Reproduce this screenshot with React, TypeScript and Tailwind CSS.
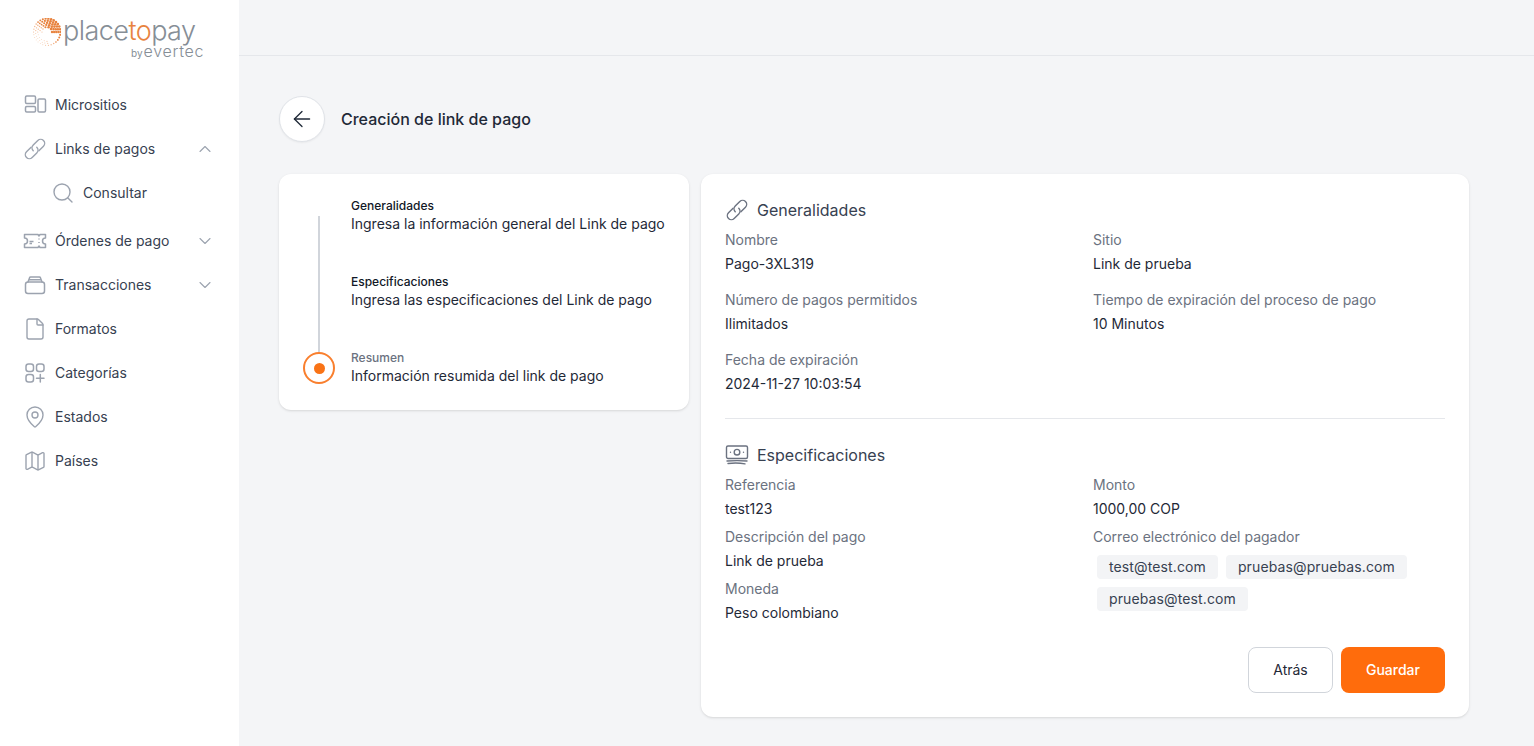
import type { ReactNode } from 'react';
import { ArrowLeft, ChevronDown, ChevronUp, File, Map as MapIcon, MapPin, Search } from 'lucide-react';

const iconCls = 'w-[24px] h-[24px] shrink-0 text-[#9ca3af]';

function SitesIcon() {
  return (
    <svg viewBox="0 0 24 24" className={iconCls} fill="none" stroke="currentColor" strokeWidth="1.5">
      <rect x="2.5" y="3" width="10" height="7.5" rx="1.2" />
      <rect x="2.5" y="13.5" width="10" height="5.5" rx="1.2" />
      <rect x="15" y="6" width="7.5" height="13" rx="1.2" />
    </svg>
  );
}

function ChainIcon({ className }: { className: string }) {
  return (
    <svg viewBox="0 0 24 24" className={className} fill="none" stroke="currentColor" strokeWidth="1.4" strokeLinecap="round">
      <g transform="rotate(-45 12 12)">
        <path d="M10.5 8H4a4 4 0 0 0 0 8h6.5a4 4 0 0 0 4-4" />
        <path d="M13.5 16H20a4 4 0 0 0 0-8h-6.5a4 4 0 0 0-4 4" />
      </g>
    </svg>
  );
}

function TicketIcon() {
  return (
    <svg viewBox="0 0 24 24" className={iconCls} fill="none" stroke="currentColor" strokeWidth="1.5" strokeLinejoin="round">
      <path d="M1.5 5.5h13.5l1 1.5 1-1.5h5.5v3.5a3 3 0 0 0 0 6v3.5H17l-1-1.5-1 1.5H1.5V15a3 3 0 0 0 0-6z" />
      <path d="M6.5 12.5h4M6.5 14.5h2.5M16 9.5v1M16 13v1" />
    </svg>
  );
}

function WalletIcon() {
  return (
    <svg viewBox="0 0 24 24" className={iconCls} fill="none" stroke="currentColor" strokeWidth="1.5" strokeLinejoin="round" strokeLinecap="round">
      <rect x="2.5" y="9" width="19" height="11.5" rx="2.5" />
      <path d="M5 9l1.6-4.2a1 1 0 0 1 1-.8h8.8a1 1 0 0 1 1 .8L19 9M6.5 6.8h11" />
    </svg>
  );
}

function CategoriesIcon() {
  return (
    <svg viewBox="0 0 24 24" className={iconCls} fill="none" stroke="currentColor" strokeWidth="1.5" strokeLinecap="round">
      <rect x="3" y="3" width="7.5" height="7.5" rx="2.5" />
      <rect x="13.5" y="3" width="7.5" height="7.5" rx="2.5" />
      <rect x="3" y="13.5" width="7.5" height="7.5" rx="2.5" />
      <path d="M17.3 13.5v7.5M13.5 17.3H21" />
    </svg>
  );
}

function MoneyIcon() {
  return (
    <svg viewBox="0 0 24 24" className="w-[24px] h-[24px] shrink-0 text-[#6b7280]" fill="none" stroke="currentColor" strokeWidth="1.4" strokeLinecap="round">
      <rect x="1.5" y="3" width="21" height="12.5" rx="1.5" />
      <circle cx="12" cy="9.2" r="2.8" />
      <path d="M5.5 9.2h.01M18.5 9.2h.01M2 18c6-.4 14-.4 20 0M3 20.5c5-.6 12-.6 17 .4" />
    </svg>
  );
}

// halftone mark of the logo
function LogoDots() {
  const dots: { x: number; y: number; r: number; c: string }[] = [];
  for (let ring = 0; ring < 5; ring++) {
    const rad = 5 + ring * 2.1;
    const count = 10 + ring * 5;
    for (let i = 0; i < count; i++) {
      const a = (i / count) * Math.PI * 2;
      const x = 14 + Math.cos(a) * rad;
      const y = 14 + Math.sin(a) * rad;
      const w = (Math.cos(a + Math.PI / 4) + 1) / 2;
      const inner = (Math.sin(a) > 0.15 && ring < 2) || (Math.cos(a) > 0.3 && Math.sin(a) > 0 && ring < 4);
      if (inner) continue;
      dots.push({ x, y, r: 0.4 + w * 0.9, c: w > 0.45 ? '#e8833f' : '#f2b48a' });
    }
  }
  return (
    <svg viewBox="0 0 28 28" className="w-[28px] h-[28px] shrink-0">
      {dots.map((d, i) => (
        <circle key={i} cx={d.x} cy={d.y} r={d.r} fill={d.c} />
      ))}
    </svg>
  );
}

function NavItem({ icon, label, chevron, sub }: { icon: ReactNode; label: string; chevron?: 'up' | 'down'; sub?: boolean }) {
  return (
    <div className={`flex items-center h-11 pr-[24px] text-sm text-[#374151] gap-[8px] ${sub ? 'pl-[51px]' : 'pl-[23px]'}`}>
      {icon}
      <span className="flex-1">{label}</span>
      {chevron === 'up' && <ChevronUp className="w-5 h-5 text-[#9ca3af]" strokeWidth={1.3} />}
      {chevron === 'down' && <ChevronDown className="w-5 h-5 text-[#9ca3af]" strokeWidth={1.3} />}
    </div>
  );
}

function Field({ label, value }: { label: string; value: string }) {
  return (
    <div className="flex flex-col gap-1 text-sm">
      <span className="text-[#6b7280] leading-5">{label}</span>
      <span className="text-[#1f2937] leading-5">{value}</span>
    </div>
  );
}

function Step({ title, desc, active }: { title: string; desc: string; active?: boolean }) {
  return (
    <div className={`flex flex-col ${active ? '' : 'h-[76px]'}`}>
      <span className={`text-xs leading-4 font-medium ${active ? 'text-[#6b7280]' : 'text-[#111827]'}`}>{title}</span>
      <span className="text-sm leading-5 text-[#1f2937]">{desc}</span>
    </div>
  );
}

function Chip({ children }: { children: string }) {
  return <span className="h-6 px-3 rounded bg-[#f3f4f6] text-sm leading-6 tracking-[0.12px] text-[#374151]">{children}</span>;
}

export default function App() {
  return (
    <div className="flex h-[746px] overflow-hidden bg-[#f4f5f7]" style={{ fontFamily: 'Inter, sans-serif' }}>
      <aside className="w-[239px] shrink-0 bg-white">
        <div className="h-[83px] pt-[18px] pl-[33px]">
          <div className="flex items-start h-[25px]">
            <LogoDots />
            <span className="text-[27px] leading-[25px] font-light text-[#868e96] ml-[2px] -tracking-[0.55px]">
              place<span className="text-[#e8833f]">to</span>pay
            </span>
          </div>
          <div className="flex items-baseline pl-[98px] text-[#868e96] leading-none">
            <span className="text-[10px]">by</span>
            <span className="text-[16px] font-light ml-px tracking-[0.7px]">evertec</span>
          </div>
        </div>
        <nav>
          <NavItem icon={<SitesIcon />} label="Micrositios" />
          <NavItem icon={<ChainIcon className={iconCls} />} label="Links de pagos" chevron="up" />
          <NavItem sub icon={<Search className={iconCls} strokeWidth={1.4} />} label="Consultar" />
          <div className="h-1" />
          <NavItem icon={<TicketIcon />} label="Órdenes de pago" chevron="down" />
          <NavItem icon={<WalletIcon />} label="Transacciones" chevron="down" />
          <NavItem icon={<File className={iconCls} strokeWidth={1.4} />} label="Formatos" />
          <NavItem icon={<CategoriesIcon />} label="Categorías" />
          <NavItem icon={<MapPin className={iconCls} strokeWidth={1.4} />} label="Estados" />
          <NavItem icon={<MapIcon className={iconCls} strokeWidth={1.4} />} label="Países" />
        </nav>
      </aside>

      <div className="flex-1 min-w-0 flex flex-col">
        <header className="h-[56px] shrink-0 border-b border-[#e5e7eb]" />
        <main className="pt-10 pl-10 pr-[65px]">
          <div className="flex items-center gap-4 h-[46px]">
            <button className="w-[46px] h-[46px] rounded-full bg-white border border-[#e0e3e8] shadow-xs flex items-center justify-center">
              <ArrowLeft className="w-[26px] h-[26px] text-[#1f2937]" strokeWidth={1.2} />
            </button>
            <h1 className="text-base font-medium text-[#1f2937]">Creación de link de pago</h1>
          </div>

          <div className="flex items-start gap-3 mt-8">
            <section className="w-[410px] shrink-0 bg-white rounded-xl shadow-sm px-6 pt-[24px] pb-6 flex gap-4">
              <div className="w-8 shrink-0 flex flex-col items-center">
                <div className="mt-[18px] w-0.5 h-[136px] bg-[#d1d5db]" />
                <div className="w-8 h-8 rounded-full border-2 border-[#f97f2e] flex items-center justify-center">
                  <div className="w-[11px] h-[11px] rounded-full bg-[#f97316]" />
                </div>
              </div>
              <div className="flex flex-col">
                <Step title="Generalidades" desc="Ingresa la información general del Link de pago" />
                <Step title="Especificaciones" desc="Ingresa las especificaciones del Link de pago" />
                <Step active title="Resumen" desc="Información resumida del link de pago" />
              </div>
            </section>

            <section className="flex-1 min-w-0 bg-white rounded-xl shadow-sm p-6">
              <div className="flex items-center gap-2 h-6">
                <ChainIcon className="w-6 h-6 shrink-0 text-[#6b7280]" />
                <h2 className="text-base text-[#374151]">Generalidades</h2>
              </div>
              <div className="grid grid-cols-2 gap-x-4 gap-y-4 mt-[8px]">
                <Field label="Nombre" value="Pago-3XL319" />
                <Field label="Sitio" value="Link de prueba" />
                <Field label="Número de pagos permitidos" value="Ilimitados" />
                <Field label="Tiempo de expiración del proceso de pago" value="10 Minutos" />
                <Field label="Fecha de expiración" value="2024-11-27 10:03:54" />
              </div>
              <div className="border-t border-[#e5e7eb] mt-[24px] mb-6" />
              <div className="flex items-center gap-2 h-6">
                <MoneyIcon />
                <h2 className="text-base text-[#374151]">Especificaciones</h2>
              </div>
              <div className="grid grid-cols-2 gap-x-4 mt-[8px]">
                <div className="flex flex-col gap-2">
                  <Field label="Referencia" value="test123" />
                  <Field label="Descripción del pago" value="Link de prueba" />
                  <Field label="Moneda" value="Peso colombiano" />
                </div>
                <div className="flex flex-col gap-2">
                  <Field label="Monto" value="1000,00 COP" />
                  <div className="text-sm">
                    <div className="text-[#6b7280] leading-5">Correo electrónico del pagador</div>
                    <div className="flex flex-wrap gap-2 mt-2 pl-1">
                      <Chip>test@test.com</Chip>
                      <Chip>pruebas@pruebas.com</Chip>
                      <Chip>pruebas@test.com</Chip>
                    </div>
                  </div>
                </div>
              </div>
              <div className="flex justify-end gap-2 mt-[24px]">
                <button className="w-[85px] h-[46px] rounded-lg border border-[#d1d5db] bg-white text-sm text-[#1f2937]">Atrás</button>
                <button className="w-[104px] h-[46px] rounded-lg bg-[#ff6c0c] text-sm font-medium text-white">Guardar</button>
              </div>
            </section>
          </div>
        </main>
      </div>
    </div>
  );
}
